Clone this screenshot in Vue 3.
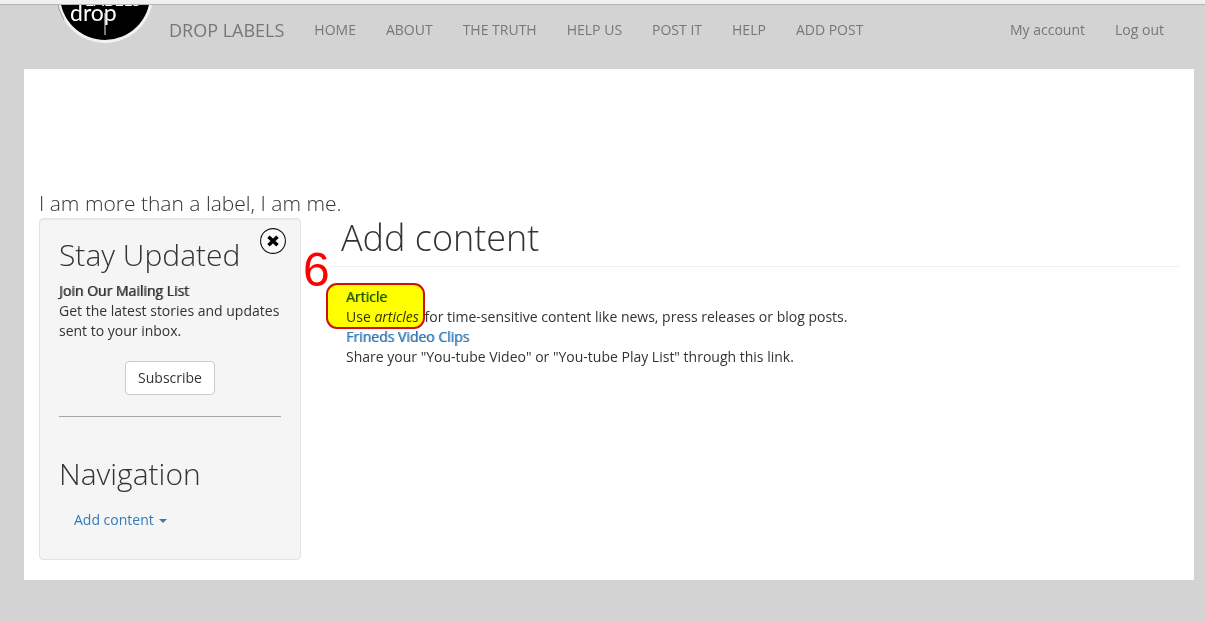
<script setup>
const links = ['HOME', 'ABOUT', 'THE TRUTH', 'HELP US', 'POST IT', 'HELP', 'ADD POST']
const account = ['My account', 'Log out']
</script>

<template>
  <div class="page">
    <div class="strip"></div>
    <header class="navbar">
      <a class="logo" href="#" aria-label="Drop Labels home">
        <svg width="98" height="40" viewBox="0 0 98 40">
          <circle cx="49" cy="-10" r="48" fill="#f2f2f2" />
          <path d="M1 -8 A48 48 0 0 0 8 15" fill="none" stroke="#999" />
          <circle cx="49" cy="-10" r="45" fill="#000" />
          <text class="logo-top" x="29" y="1">LABELS</text>
          <text class="logo-word" x="14" y="16">drop</text>
          <path d="M49 8V30" stroke="#eee" stroke-width="1" />
        </svg>
      </a>
      <a class="brand" href="#">DROP LABELS</a>
      <nav class="menu">
        <a v-for="l in links" :key="l" href="#">{{ l }}</a>
      </nav>
      <nav class="menu account">
        <a v-for="l in account" :key="l" href="#">{{ l }}</a>
      </nav>
    </header>

    <div class="container">
      <p class="lead">I am more than a label, I am me.</p>
      <div class="row">
        <aside class="well">
          <button class="close" type="button" aria-label="Close">
            <svg width="26" height="26" viewBox="0 0 26 26">
              <circle cx="13" cy="13" r="12.4" fill="#fafafa" stroke="#111" stroke-width="1.1" />
              <path d="M8.5 8.8L17.5 17.2M17.5 8.8L8.5 17.2" stroke="#000" stroke-width="3.6" />
            </svg>
          </button>
          <h2>Stay Updated</h2>
          <p><b>Join Our Mailing List</b><br />Get the latest stories and updates sent to your inbox.</p>
          <button class="subscribe" type="button">Subscribe</button>
          <hr />
          <h2>Navigation</h2>
          <a class="toggle" href="#">Add content <span class="caret"></span></a>
        </aside>
        <main>
          <h1>Add content</h1>
          <dl>
            <dt><a class="active" href="#">Article</a></dt>
            <dd>Use <em>articles</em> for time-sensitive content like news, press releases or blog posts.</dd>
            <dt><a href="#">Frineds Video Clips</a></dt>
            <dd>Share your "You-tube Video" or "You-tube Play List" through this link.</dd>
          </dl>
          <span class="step">6</span>
          <div class="marker"></div>
        </main>
      </div>
    </div>
  </div>
</template>

<style>
body {
  margin: 0;
  background: #d3d3d3;
}
</style>

<style scoped>
.page {
  font-family: "Open Sans", sans-serif;
  font-size: 14px;
  line-height: 20px;
  color: #333;
}
.page * {
  box-sizing: border-box;
}
a {
  color: #337ab7;
  text-decoration: none;
}
a.active {
  color: #23527c;
}
.strip {
  height: 5px;
  background: #f0f0f0;
  border-bottom: 1px solid #b4b4b4;
}
.navbar {
  display: flex;
  align-items: flex-start;
  height: 64px;
  padding: 0 26px 0 56px;
}
.logo {
  width: 98px;
  height: 40px;
}
.logo svg {
  display: block;
}
.logo-word {
  font-family: Lato, sans-serif;
  font-weight: 400;
  font-size: 23px;
  fill: #fff;
}
.logo-top {
  font-family: Lato, sans-serif;
  font-size: 16px;
  fill: #fff;
}
.brand {
  padding: 15px;
  font-size: 18px;
  color: #777;
  white-space: nowrap;
}
.menu {
  display: flex;
}
.menu a {
  padding: 15px;
  color: #777;
  white-space: nowrap;
}
.account {
  margin-left: auto;
}
.container {
  margin: 0 11px 0 24px;
  padding: 120px 15px 20px;
  background: #fff;
}
.lead {
  margin: 0;
  font-size: 21px;
  font-weight: 300;
  line-height: 29px;
}
.row {
  display: grid;
  grid-template-columns: 262px minmax(0, 1fr);
  column-gap: 30px;
}
.well {
  position: relative;
  padding: 19px;
  border: 1px solid #e3e3e3;
  border-radius: 4px;
  background: #f5f5f5;
  box-shadow: inset 0 1px 1px rgba(0, 0, 0, 0.05);
}
h1,
h2 {
  margin: 0;
  font-weight: 300;
}
h2 {
  margin-bottom: 10px;
  font-size: 30px;
  line-height: 33px;
}
.well p {
  margin: 0 0 20px;
}
b,
dt {
  font-weight: 400;
}
b {
  text-shadow: 1px 0 0 rgba(51, 51, 51, 0.6);
}
dt {
  text-shadow: 1px 0 0 rgba(51, 122, 183, 0.6);
}
.close {
  position: absolute;
  top: 9px;
  right: 14px;
  padding: 0;
  border: 0;
  background: none;
}
.close svg {
  display: block;
}
.subscribe {
  display: block;
  height: 34px;
  margin: 0 auto;
  padding: 0 12px;
  border: 1px solid #ccc;
  border-radius: 4px;
  background: #fff;
  font: inherit;
  color: #333;
}
hr {
  margin: 21px 0 40px;
  border: 0;
  border-top: 1px solid #a5a5a5;
}
.toggle {
  display: block;
  padding: 10px 15px;
}
.caret {
  display: inline-block;
  margin-left: 2px;
  vertical-align: middle;
  border-top: 4px solid;
  border-right: 4px solid transparent;
  border-left: 4px solid transparent;
}
main {
  position: relative;
}
h1 {
  padding: 0 10px 8px;
  border-bottom: 1px solid #eee;
  font-size: 36px;
  line-height: 40px;
}
dl {
  margin: 20px 0 0;
  padding: 0 15px;
}
dd {
  margin: 0;
}
em {
  padding-right: 2px;
}
.marker {
  position: absolute;
  top: 65px;
  left: -5px;
  width: 99px;
  height: 46px;
  border: 2px solid #d01010;
  border-radius: 11px;
  background: #ff0;
  mix-blend-mode: multiply;
}
.step {
  position: absolute;
  top: 28px;
  left: -28px;
  font-family: "Liberation Sans", Arial, sans-serif;
  font-size: 48px;
  line-height: 48px;
  color: #f00;
}
</style>
